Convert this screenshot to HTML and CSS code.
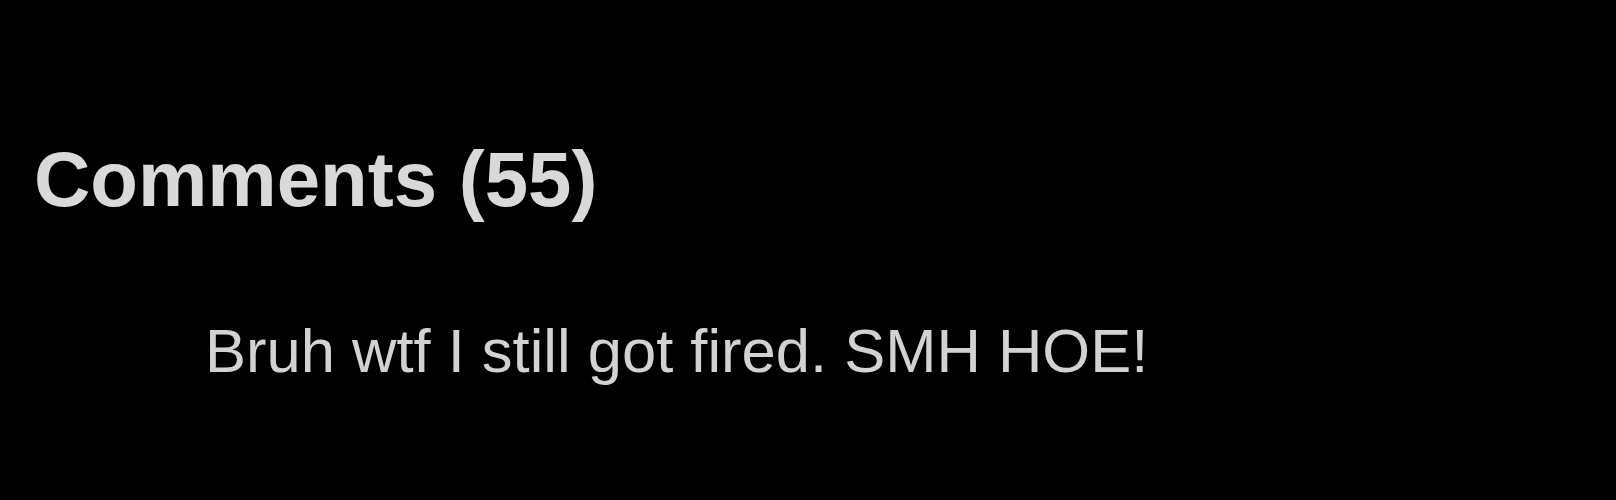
FILE: index.html
```html
<!DOCTYPE html>
<html lang="en">
<head>
<meta charset="utf-8">
<title>Comments</title>
<link rel="stylesheet" href="styles.css">
</head>
<body>
<section class="comments">
  <h2 class="comments-title">Comments (55)</h2>
  <ul class="comment-list">
    <li class="comment">Bruh wtf I still got fired. SMH HOE!</li>
  </ul>
</section>
</body>
</html>
```

FILE: styles.css
```css
html, body {
  margin: 0;
  padding: 0;
  background: #000;
  width: 1616px;
  height: 500px;
  overflow: hidden;
}

.comments {
  display: flex;
  flex-direction: column;
  padding: 140px 0 0 34px;
  font-family: "Liberation Sans", Arial, sans-serif;
}

.comments-title {
  margin: 0;
  font-size: 78px;
  line-height: 78px;
  font-weight: 700;
  color: #d9d9d9;
}

.comment-list {
  list-style: none;
  margin: 102px 0 0;
  padding: 0 0 0 171px;
}

.comment {
  font-size: 61.5px;
  line-height: 61.5px;
  font-weight: 400;
  color: #d2d2d2;
}
```
